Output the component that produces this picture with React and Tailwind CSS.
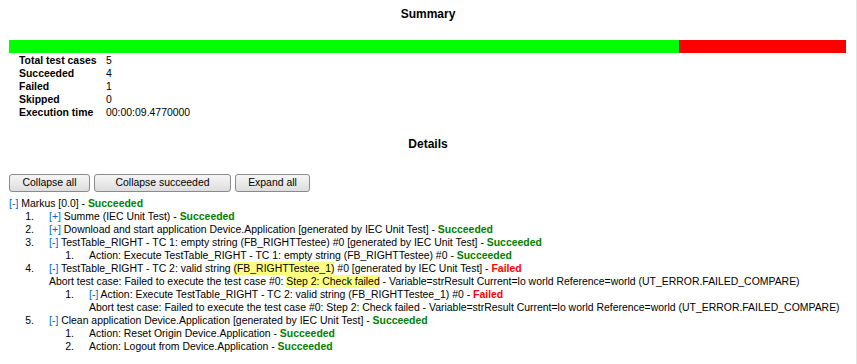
import React from 'react';

const OK = () => <span className="font-bold text-[#008000]">Succeeded</span>;
const FAIL = () => <span className="font-bold text-[#ff0000]">Failed</span>;
const Tog = ({ c = '-' }) => <span className="text-[#0066cc]">[{c}]</span>;
const Hl = ({ children }) => <span className="bg-[#ffff80] py-[1px]">{children}</span>;

const Row = ({ n, indent = 0, children }) => (
  <div className="flex" style={{ paddingLeft: indent }}>
    <span className="w-[25px] text-right">{n}</span>
    <span className="ml-[15px] whitespace-nowrap">{children}</span>
  </div>
);

const Note = ({ indent, children }) => (
  <div className="whitespace-nowrap" style={{ paddingLeft: indent }}>{children}</div>
);

const stats = [
  ['Total test cases', '5'],
  ['Succeeded', '4'],
  ['Failed', '1'],
  ['Skipped', '0'],
  ['Execution time', '00:00:09.4770000'],
];

const btn =
  'h-[18px] px-0 rounded-[3px] border border-[#8a8a8a] bg-gradient-to-b from-[#f6f6f6] to-[#dddddd] text-[10.45px] leading-none text-black whitespace-nowrap';

export default function App() {
  return (
    <div className="w-[857px] h-[364px] bg-white border-r border-[#e3e3e3] font-['Liberation_Sans',Arial,sans-serif] text-[10.45px] leading-[13px] text-black overflow-hidden">
      <div className="pt-[7px] text-center text-[12px] font-bold leading-[14px]">Summary</div>

      <div className="mt-[19px] ml-[9px] flex h-[13px] w-[837px]">
        <div className="w-[670px] bg-[#00ff00]" />
        <div className="flex-1 bg-[#ff0000]" />
      </div>

      <div className="mt-[2px] ml-[19px] grid grid-cols-[87px_auto] auto-rows-[12.9px] leading-[12.9px]">
        {stats.map(([k, v]) => (
          <React.Fragment key={k}>
            <div className="font-bold">{k}</div>
            <div>{v}</div>
          </React.Fragment>
        ))}
      </div>

      <div className="mt-[18px] text-center text-[12px] font-bold leading-[14px]">Details</div>

      <div className="mt-[23px] ml-[9px] flex gap-[4px]">
        <button className={`${btn} w-[81px]`}>Collapse all</button>
        <button className={`${btn} w-[137px]`}>Collapse succeeded</button>
        <button className={`${btn} w-[75px]`}>Expand all</button>
      </div>

      <div className="mt-[5px] ml-[9px]">
        <div className="whitespace-nowrap">
          <Tog /> Markus [0.0] - <OK />
        </div>
        <Row n="1.">
          <Tog c="+" /> Summe (IEC Unit Test) - <OK />
        </Row>
        <Row n="2.">
          <Tog c="+" /> Download and start application Device.Application [generated by IEC Unit Test] - <OK />
        </Row>
        <Row n="3.">
          <Tog /> TestTable_RIGHT - TC 1: empty string (FB_RIGHTTestee) #0 [generated by IEC Unit Test] - <OK />
        </Row>
        <Row n="1." indent={40}>
          Action: Execute TestTable_RIGHT - TC 1: empty string (FB_RIGHTTestee) #0 - <OK />
        </Row>
        <Row n="4.">
          <Tog /> TestTable_RIGHT - TC 2: valid string <Hl>(FB_RIGHTTestee_1)</Hl> #0 [generated by IEC Unit Test] - <FAIL />
        </Row>
        <Note indent={40}>
          Abort test case: Failed to execute the test case #0: <Hl>Step 2: Check failed</Hl> - Variable=strResult Current=lo world Reference=world (UT_ERROR.FAILED_COMPARE)
        </Note>
        <Row n="1." indent={40}>
          <Tog /> Action: Execute TestTable_RIGHT - TC 2: valid string (FB_RIGHTTestee_1) #0 - <FAIL />
        </Row>
        <Note indent={80}>
          Abort test case: Failed to execute the test case #0: Step 2: Check failed - Variable=strResult Current=lo world Reference=world (UT_ERROR.FAILED_COMPARE)
        </Note>
        <Row n="5.">
          <Tog /> Clean application Device.Application [generated by IEC Unit Test] - <OK />
        </Row>
        <Row n="1." indent={40}>
          Action: Reset Origin Device.Application - <OK />
        </Row>
        <Row n="2." indent={40}>
          Action: Logout from Device.Application - <OK />
        </Row>
      </div>
    </div>
  );
}
